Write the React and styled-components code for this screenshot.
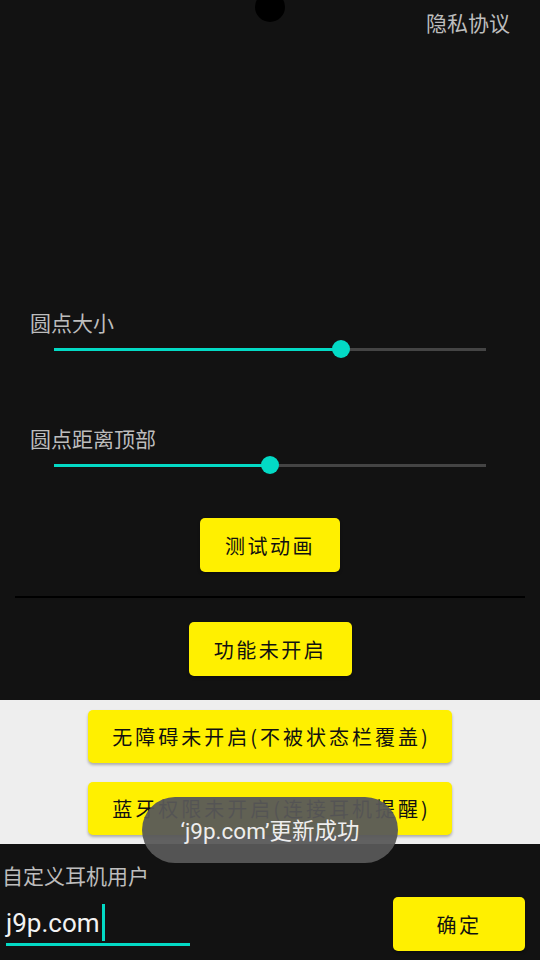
import React from 'react'
import styled, { createGlobalStyle } from 'styled-components'

const GlobalStyle = createGlobalStyle`
    html, body {
        margin: 0;
        padding: 0;
        background: #121212;
    }
    body {
        font-family: "Noto Sans CJK SC", "Noto Sans", sans-serif;
    }
`

const Screen = styled.div`
    position: relative;
    width: 540px;
    height: 960px;
    overflow: hidden;
    background: #121212;
    display: flex;
    flex-direction: column;
`

const Notch = styled.div`
    position: absolute;
    top: -8px;
    left: 255px;
    width: 30px;
    height: 30px;
    border-radius: 50%;
    background: #000;
`

const Header = styled.div`
    height: 308px;
    display: flex;
    justify-content: flex-end;
    align-items: flex-start;
    padding: 8px 30px 0 0;
    box-sizing: border-box;
`

const PrivacyLink = styled.span`
    font-size: 21px;
    line-height: 28px;
    color: #bdbdbd;
`

const SliderBlock = styled.div`
    display: flex;
    flex-direction: column;
    margin-bottom: ${props => props.gap || 0}px;
`

const Label = styled.div`
    font-size: 21px;
    line-height: 28px;
    color: #bdbdbd;
    padding-left: ${props => props.indent || 30}px;
`

const SliderRow = styled.div`
    height: 24px;
    margin: 1px 54px 0;
    display: flex;
    align-items: center;
`

const Track = styled.div`
    position: relative;
    flex: 1;
    height: 3px;
    background: #444;
`

const Fill = styled.div`
    height: 100%;
    background: #03dac5;
`

const Thumb = styled.div`
    position: absolute;
    top: 50%;
    width: 18px;
    height: 18px;
    margin: -9px 0 0 -9px;
    border-radius: 50%;
    background: #03dac5;
`

const ButtonRow = styled.div`
    display: flex;
    justify-content: center;
    margin-top: ${props => props.top || 0}px;
`

const YellowButton = styled.button`
    height: ${props => props.h || 54}px;
    width: ${props => props.w}px;
    border: none;
    border-radius: 5px;
    background: #fff000;
    color: #111;
    font-family: "Noto Sans CJK SC", "Noto Sans", sans-serif;
    font-size: 20px;
    letter-spacing: 2.5px;
    padding: 0;
    box-shadow: 0 2px 3px rgba(0, 0, 0, 0.28);
    cursor: pointer;
`

const Divider = styled.div`
    height: 2px;
    margin: 24px 15px 0;
    background: #000;
`

const LightPanel = styled.div`
    margin-top: 24px;
    height: 144px;
    box-sizing: border-box;
    padding-top: 10px;
    background: #eeeeee;
    display: flex;
    flex-direction: column;
    align-items: center;
    gap: 19px;
`

const WideButton = styled(YellowButton)`
    letter-spacing: 3px;
    padding-left: 3px;
`

const Bottom = styled.div`
    display: flex;
    flex-direction: column;
    padding-top: 17px;
`

const InputRow = styled.div`
    display: flex;
    justify-content: space-between;
    align-items: flex-start;
    margin-top: 8px;
    padding: 0 15px 0 6px;
`

const Field = styled.div`
    width: 184px;
    height: 48px;
    margin-top: 1px;
    box-sizing: border-box;
    border-bottom: 3px solid #03dac5;
    display: flex;
    align-items: center;
    padding-top: 4px;
`

const FieldText = styled.span`
    font-family: Roboto, "Noto Sans", sans-serif;
    font-size: 26px;
    color: #f2f2f2;
    line-height: 30px;
`

const Caret = styled.span`
    display: inline-block;
    width: 3px;
    height: 37px;
    margin-left: 2px;
    background: #03dac5;
`

const Toast = styled.div`
    position: absolute;
    top: 797px;
    left: 142px;
    width: 256px;
    height: 66px;
    border-radius: 33px;
    background: rgba(88, 88, 88, 0.95);
    color: #eeeeee;
    font-family: Roboto, "Noto Sans CJK SC", sans-serif;
    font-size: 22.5px;
    display: flex;
    justify-content: center;
    align-items: center;
    padding-bottom: 2px;
    box-sizing: border-box;
`

const Slider = ({ label, value, gap }) => (
    <SliderBlock gap={gap}>
        <Label>{label}</Label>
        <SliderRow>
            <Track>
                <Fill style={{ width: `${value}%` }} />
                <Thumb style={{ left: `${value}%` }} />
            </Track>
        </SliderRow>
    </SliderBlock>
)

const App = () => (
    <Screen>
        <GlobalStyle />
        <Notch />
        <Header>
            <PrivacyLink>隐私协议</PrivacyLink>
        </Header>
        <Slider label="圆点大小" value={66.4} gap={63} />
        <Slider label="圆点距离顶部" value={50} />
        <ButtonRow top={41}>
            <YellowButton w={140}>测试动画</YellowButton>
        </ButtonRow>
        <Divider />
        <ButtonRow top={24}>
            <YellowButton w={163}>功能未开启</YellowButton>
        </ButtonRow>
        <LightPanel>
            <WideButton w={364} h={53}>无障碍未开启(不被状态栏覆盖)</WideButton>
            <WideButton w={364} h={53}>蓝牙权限未开启(连接耳机提醒)</WideButton>
        </LightPanel>
        <Bottom>
            <Label indent={2}>自定义耳机用户</Label>
            <InputRow>
                <Field>
                    <FieldText>j9p.com</FieldText>
                    <Caret />
                </Field>
                <YellowButton w={132}>确定</YellowButton>
            </InputRow>
        </Bottom>
        <Toast>‘j9p.com’更新成功</Toast>
    </Screen>
)

export default App
